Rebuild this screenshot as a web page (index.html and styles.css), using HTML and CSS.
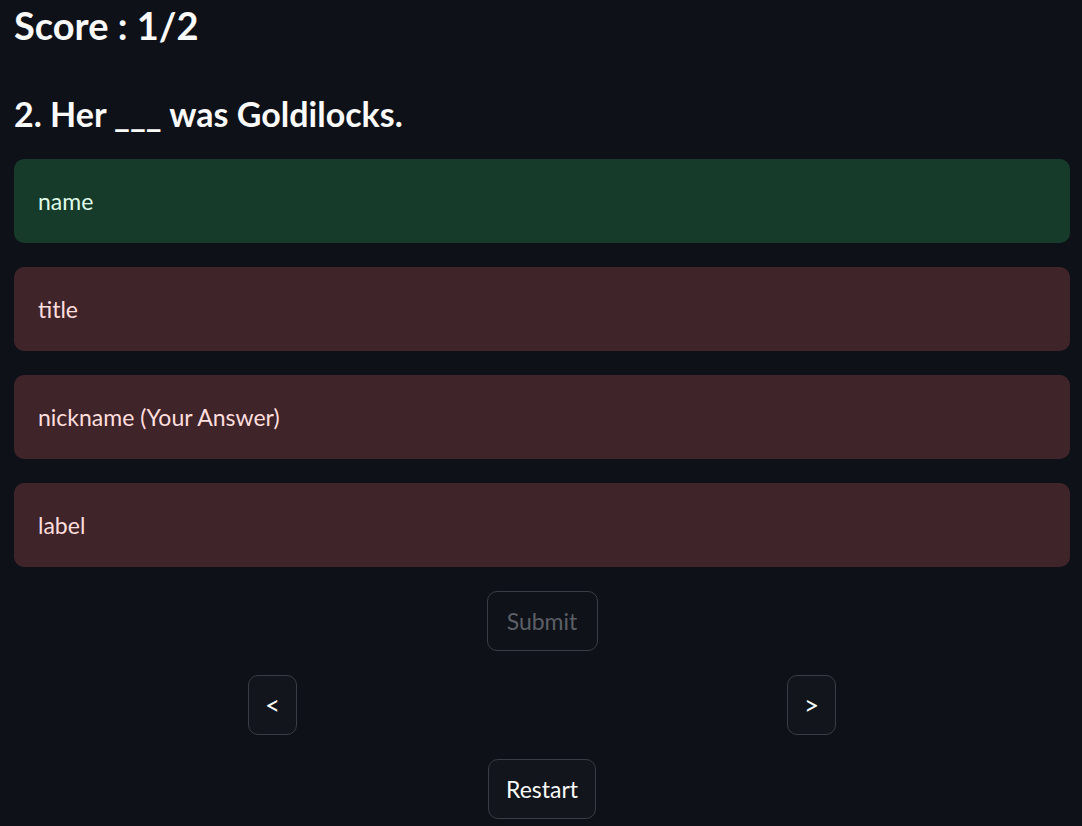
FILE: index.html
```html
<!DOCTYPE html>
<html>
<head>
<meta charset="utf-8">
<link rel="stylesheet" href="styles.css">
</head>
<body>
<main class="page">
  <h1 class="score">Score : 1/2</h1>
  <h2 class="question">2. Her ___ was Goldilocks.</h2>
  <div class="options">
    <div class="option correct">name</div>
    <div class="option wrong">title</div>
    <div class="option wrong">nickname (Your Answer)</div>
    <div class="option wrong">label</div>
  </div>
  <div class="center-row">
    <button class="btn submit" disabled>Submit</button>
  </div>
  <div class="nav-row">
    <div class="nav-col"><button class="btn nav">&lt;</button></div>
    <div class="nav-col"><button class="btn nav">&gt;</button></div>
  </div>
  <div class="center-row">
    <button class="btn restart">Restart</button>
  </div>
</main>
</body>
</html>
```
FILE: styles.css
```css
html, body {
  margin: 0;
  background: #0e1117;
}
body {
  font-family: Lato, "Open Sans", sans-serif;
  color: #fafafa;
}
.page {
  padding: 0 12px 0 14px;
  display: flex;
  flex-direction: column;
}
.score {
  margin: 0;
  font-size: 38px;
  font-weight: 700;
  line-height: 50px;
  height: 50px;
}
.question {
  margin: 38px 0 0 0;
  font-size: 34px;
  font-weight: 700;
  line-height: 52px;
  height: 52px;
}
.options {
  margin-top: 19px;
  display: flex;
  flex-direction: column;
  gap: 24px;
}
.option {
  height: 84px;
  border-radius: 10px;
  padding: 0 24px;
  display: flex;
  align-items: center;
  font-size: 23px;
}
.correct {
  background: #173b2a;
  color: #dffde9;
}
.wrong {
  background: #3f2429;
  color: #ffdede;
}
.center-row {
  display: flex;
  justify-content: center;
  margin-top: 24px;
}
.nav-row {
  margin-top: 24px;
  display: grid;
  grid-template-columns: 1fr 1fr;
  gap: 22px;
}
.nav-col {
  display: flex;
  justify-content: center;
}
.btn {
  height: 60px;
  border-radius: 10px;
  border: 1px solid #3a3d45;
  background: #12151c;
  color: #fafafa;
  font-family: Lato, "Open Sans", sans-serif;
  font-size: 23px;
  padding: 0 16px;
}
.submit {
  color: #5c5f66;
  background: #0f1219;
  width: 111px;
}
.restart {
  width: 108px;
}
.nav {
  width: 49px;
  padding: 0;
  font-size: 26px;
}
```
